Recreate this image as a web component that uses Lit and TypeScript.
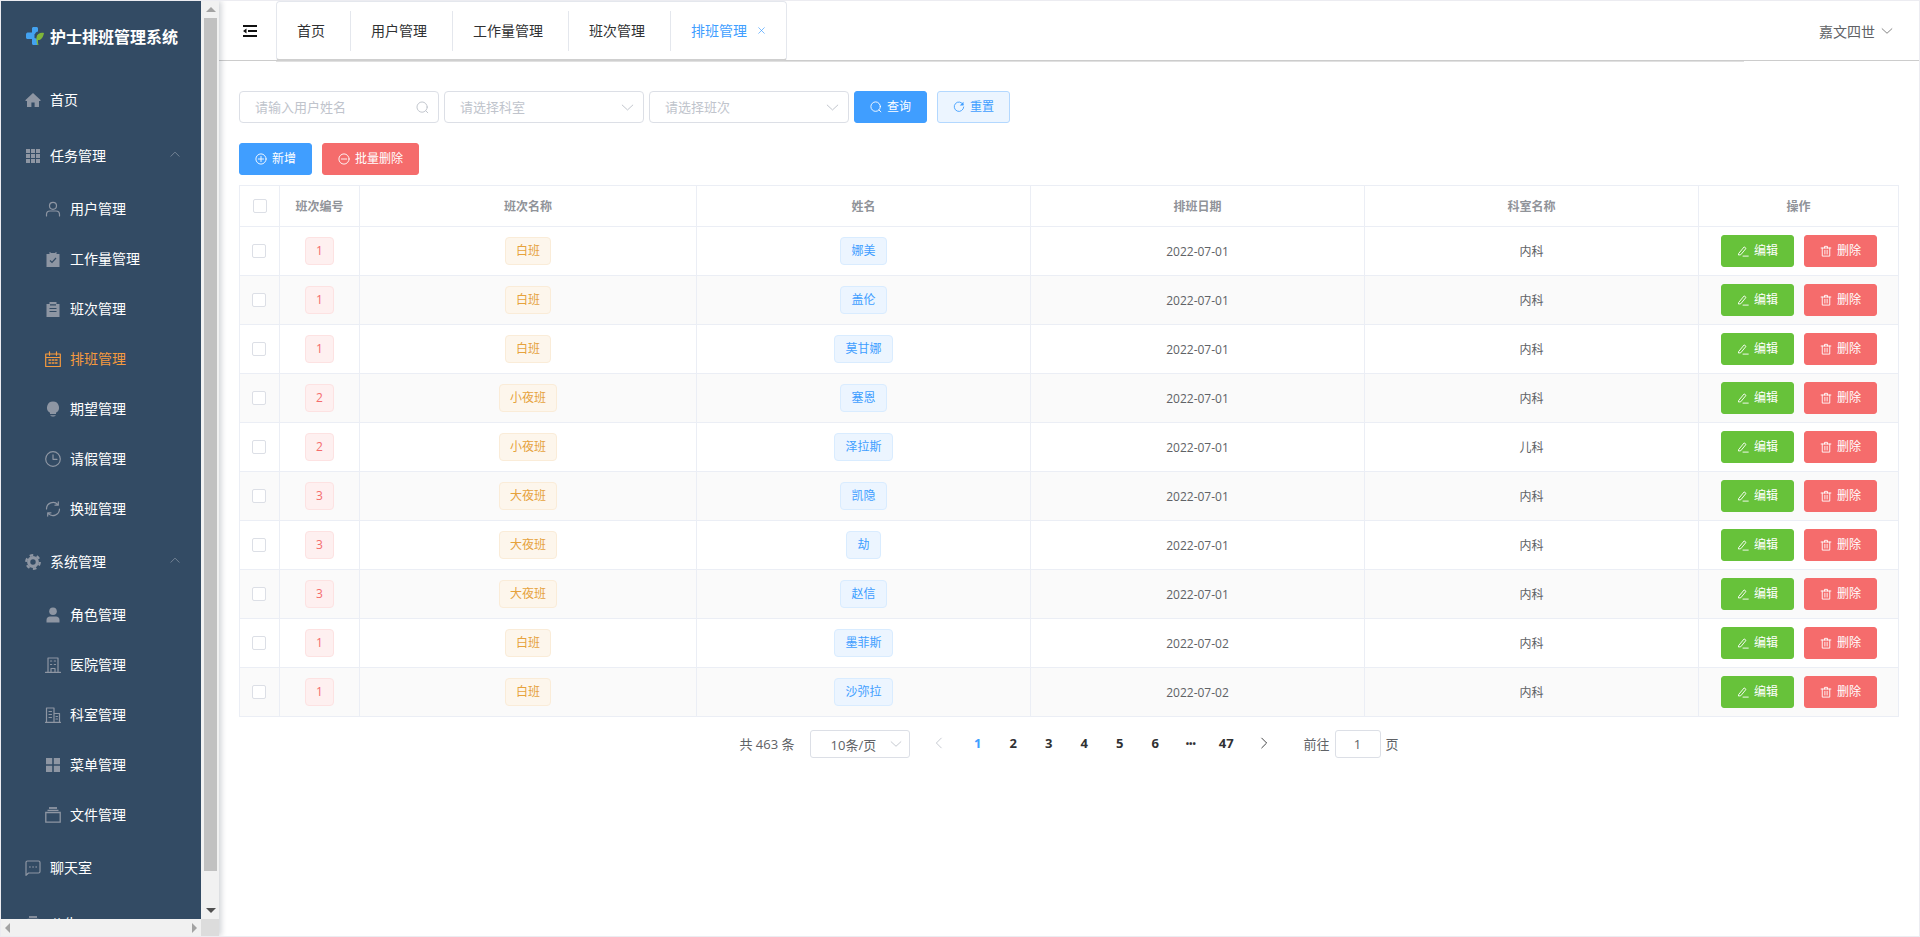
import { LitElement, html, svg, css, SVGTemplateResult, TemplateResult } from "lit";
import { customElement } from "lit/decorators.js";

const sk = (inner: SVGTemplateResult, cls = "") =>
  html`<svg class="ic ${cls}" viewBox="0 0 16 16" fill="none" stroke="currentColor" stroke-width="1.2" stroke-linecap="round" stroke-linejoin="round">${inner}</svg>`;
const fl = (inner: SVGTemplateResult, cls = "") =>
  html`<svg class="ic ${cls}" viewBox="0 0 16 16" fill="currentColor" stroke="none">${inner}</svg>`;

const icons: Record<string, () => TemplateResult> = {
  home: () => fl(svg`<path d="M8 1 .5 8v1H2v6h4.400v-4.500h3.200V15H14V9h1.500V8z"/>`),
  grid: () => fl(svg`<path d="M1 1h4v4H1zM6 1h4v4H6zM11 1h4v4h-4zM1 6h4v4H1zM6 6h4v4H6zM11 6h4v4h-4zM1 11h4v4H1zM6 11h4v4H6zM11 11h4v4h-4z"/>`),
  user: () => sk(svg`<circle cx="8" cy="4.800" r="3.500"/><path d="M1.500 15v-1.500c0-2 1.500-3.500 3.500-3.500h6c2 0 3.500 1.500 3.500 3.500V15"/>`),
  claim: () => html`<svg class="ic" viewBox="0 0 16 16"><path fill="currentColor" d="M1.500 3h3V1h1v1h5V1h1v2h3v13h-13z"/><path fill="none" stroke="#334b64" stroke-width="1.200" d="M5 9.500l2 2 4-4.500"/></svg>`,
  order: () => html`<svg class="ic" viewBox="0 0 16 16"><path fill="currentColor" d="M1.500 3h3V1h7v2h3v13h-13z"/><path fill="none" stroke="#334b64" stroke-width="1.200" d="M4.500 7.500h7M4.500 10.500h7M5 3.800h6"/></svg>`,
  date: () => sk(svg`<path d="M.7 3h14.600v12.500H.7zM.7 6.500h14.600M4.500 .8v3.500M11.500 .8v3.500"/><path stroke-width="1.500" d="M4 9h1.500M7.300 9h1.500M10.500 9h1.500M4 12h1.500M7.300 12h1.500M10.500 12h1.500"/>`),
  bulb: () => fl(svg`<path d="M8 .5a6 6 0 0 0-3 11.200V13h6v-1.300A6 6 0 0 0 8 .5zM5.500 14h5v.8h-5zM6.500 15.200h3v.6h-3z"/>`),
  time: () => sk(svg`<circle cx="8" cy="8" r="7.300"/><path d="M8 3.800v4.500h4"/>`),
  refresh: () => sk(svg`<path d="M1.500 8A6.500 6.500 0 0 1 12.800 3.600M14.500 8A6.500 6.500 0 0 1 3.200 12.400M13.300 .9v3.300H10M2.700 15.100v-3.300H6"/>`),
  gear: () => html`<svg class="ic gear" viewBox="0 0 16 16" fill="none" stroke="currentColor"><circle cx="8" cy="8" r="4.300" stroke-width="3.200"/><circle cx="8" cy="8" r="6.800" stroke-width="2.200" stroke-dasharray="3.600 3.520"/></svg>`,
  custom: () => fl(svg`<circle cx="8" cy="4.300" r="3.800"/><path d="M1.500 15.500V13c0-2 1.500-3.500 3.500-3.500h6c2 0 3.500 1.500 3.500 3.500v2.500z"/>`),
  office: () => sk(svg`<path d="M3 15V1h10v14M.5 15.300h15M6 15v-3.500h4V15"/><path d="M5.500 4h1.200M9.300 4h1.200M5.500 7.500h1.200M9.300 7.500h1.200"/>`),
  dept: () => sk(svg`<path d="M1.500 15V1h7.500v14M9 6.500h5.500V15M.5 15.300h15M4 4.500h2.500M4 7.500h2.500M4 10.500h2.500M11 9.500h1.500M11 12h1.500"/>`),
  menu: () => fl(svg`<path d="M1 1h6.200v6.200H1zM8.800 1H15v6.200H8.800zM1 8.800h6.200V15H1zM8.800 8.800H15V15H8.800z"/>`),
  files: () => html`<svg class="ic" viewBox="0 0 16 16" fill="none" stroke="currentColor" stroke-width="1.300"><path d="M.8 5.500h14.400v9.700H.8zM2.500 3.300h11"/><path stroke-width="1.800" d="M4 1h8"/></svg>`,
  chat: () => sk(svg`<path d="M2.500 1h11c.8 0 1.500.7 1.500 1.500v9c0 .8-.7 1.500-1.500 1.500H3.500L1 15.300V2.500C1 1.700 1.700 1 2.500 1z"/><path stroke-width="1.300" d="M4.800 7h.3M7.900 7h.3M11 7h.3"/>`),
  search: () => sk(svg`<circle cx="7.500" cy="7.500" r="6.300"/><path d="M12 12l2.500 2.500"/>`),
  reset: () => sk(svg`<path d="M13.500 4.500A6.300 6.300 0 1 0 14.300 8"/><path fill="currentColor" stroke="none" d="M14 1v5h-5z"/>`),
  plusc: () => sk(svg`<circle cx="8" cy="8" r="6.800"/><path d="M8 4.500v7M4.500 8h7"/>`),
  minusc: () => sk(svg`<circle cx="8" cy="8" r="6.800"/><path d="M4.500 8h7"/>`),
  edit: () => sk(svg`<path d="M2.500 11 9.500 2.500l2.500 2-7 8.500-2.500.3zM8 14.800h7"/>`),
  trash: () => sk(svg`<path d="M1.500 4h13M6 4V1.800h4V4M3 4v10.800h10V4M6.500 7v5M9.500 7v5"/>`),
  down: () => sk(svg`<path d="M1.500 5 8 11l6.500-6"/>`),
  left: () => sk(svg`<path d="M11 1.500 4.500 8l6.500 6.500"/>`),
  right: () => sk(svg`<path d="M5 1.500 11.500 8 5 14.500"/>`),
  close: () => sk(svg`<path d="M3 3l10 10M13 3 3 13"/>`),
};

interface MenuEntry { t: string; i: string; open?: boolean; sub?: { t: string; i: string; active?: boolean }[] }
const MENU: MenuEntry[] = [
  { t: "首页", i: "home" },
  { t: "任务管理", i: "grid", open: true, sub: [
    { t: "用户管理", i: "user" }, { t: "工作量管理", i: "claim" }, { t: "班次管理", i: "order" },
    { t: "排班管理", i: "date", active: true }, { t: "期望管理", i: "bulb" }, { t: "请假管理", i: "time" }, { t: "换班管理", i: "refresh" },
  ] },
  { t: "系统管理", i: "gear", open: true, sub: [
    { t: "角色管理", i: "custom" }, { t: "医院管理", i: "office" }, { t: "科室管理", i: "dept" },
    { t: "菜单管理", i: "menu" }, { t: "文件管理", i: "files" },
  ] },
  { t: "聊天室", i: "chat" },
  { t: "公告", i: "files" },
];

const TABS = ["首页", "用户管理", "工作量管理", "班次管理"];
const ROWS = [
  ["1", "白班", "娜美", "2022-07-01", "内科"],
  ["1", "白班", "盖伦", "2022-07-01", "内科"],
  ["1", "白班", "莫甘娜", "2022-07-01", "内科"],
  ["2", "小夜班", "塞恩", "2022-07-01", "内科"],
  ["2", "小夜班", "泽拉斯", "2022-07-01", "儿科"],
  ["3", "大夜班", "凯隐", "2022-07-01", "内科"],
  ["3", "大夜班", "劫", "2022-07-01", "内科"],
  ["3", "大夜班", "赵信", "2022-07-01", "内科"],
  ["1", "白班", "墨菲斯", "2022-07-02", "内科"],
  ["1", "白班", "沙弥拉", "2022-07-02", "内科"],
];
const HEAD = ["班次编号", "班次名称", "姓名", "排班日期", "科室名称", "操作"];

@customElement("app-root")
export class AppRoot extends LitElement {
  static styles = css`
    :host {
      display: flex;
      box-sizing: border-box;
      height: 937px;
      border: 1px solid #ececf1;
      background: #fff;
      font-family: "Open Sans", "Noto Sans CJK SC", sans-serif;
      font-size: 14px;
      color: #606266;
      overflow: hidden;
    }
    * { box-sizing: border-box; }
    .ic { width: 14px; height: 14px; flex: none; display: block; }

    .side {
      width: 218px;
      flex: none;
      display: grid;
      grid-template-columns: 200px 18px;
      grid-template-rows: 918px 17px;
      box-shadow: 2px 0 6px rgba(0, 21, 41, 0.2);
      position: relative;
      z-index: 2;
    }
    .nav { background: #334b64; overflow: hidden; color: #fff; }
    .logo { height: 71px; display: flex; align-items: center; padding: 0 0 2px 25px; gap: 6px; font-size: 16px; font-weight: 700; }
    .logo svg { width: 18px; height: 18px; flex: none; }
    .item { height: 56px; display: flex; align-items: center; padding-left: 24px; gap: 9px; color: #fff; line-height: 20px; }
    .item .ic { color: #8e96a3; width: 16px; height: 16px; }
    .item .chev { width: 10px; height: 10px; margin-left: auto; margin-right: 21px; margin-top: -4px; color: #7d8c9c; }
    .sub { height: 50px; padding-left: 44px; }
    .sub.active { color: #f59a3e; }
    .sub.active .ic { color: #f59a3e; }

    .vbar { background: #f1f1f1; display: flex; flex-direction: column; align-items: flex-end; padding-right: 2px; }
    .arrow { height: 17px; width: 13px; display: flex; align-items: center; justify-content: center; flex: none; }
    .tri { width: 0; height: 0; border-style: solid; border-color: transparent; }
    .tri.u { border-width: 0 5px 5px; border-bottom-color: #a3a3a3; }
    .tri.d { border-width: 5px 5px 0; border-top-color: #505050; }
    .tri.l { border-width: 5px 5px 5px 0; border-right-color: #a3a3a3; }
    .tri.r { border-width: 5px 0 5px 5px; border-left-color: #a3a3a3; }
    .thumb { width: 13px; height: 853px; background: #c1c1c1; flex: none; }
    .spacer { flex: 1; }
    .hbar { background: #f1f1f1; display: flex; align-items: center; justify-content: space-between; padding: 0 4px; }
    .corner { background: #dcdcdc; }

    .main { flex: 1; min-width: 0; display: flex; flex-direction: column; }
    .top { height: 60px; flex: none; display: flex; border-bottom: 1px solid #ccc; background: #fff; }
    .burger { width: 57px; flex: none; display: flex; align-items: center; justify-content: center; padding-top: 1px; padding-left: 4px; color: #111; }
    .burger svg { width: 14px; height: 12px; display: block; }
    .tabwrap { flex: 1; height: 61px; border-bottom: 1px solid #e0e0e0; }
    .tabs {
      display: inline-flex;
      height: 60px;
      border: 1px solid #e4e7ed;
      border-bottom: 2px solid #cfcfcf;
      border-radius: 4px;
      background: #fff;
      align-items: center;
    }
    .tab { height: 40px; padding: 0 25px 0 20px; display: flex; align-items: center; color: #303133; border-right: 1px solid #e4e7ed; line-height: 20px; }
    .tab:last-child { border-right: 0; padding-right: 20px; color: #409eff; gap: 10px; }
    .tab .ic { width: 9px; height: 9px; }
    .userbox { width: 175px; flex: none; display: flex; align-items: center; justify-content: flex-end; padding-right: 26px; gap: 6px; color: #606266; }
    .userbox .ic { width: 12px; height: 12px; color: #777; }

    .content { padding: 30px 20px 0 20px; }
    .filters { display: flex; align-items: center; height: 32px; }
    .field {
      width: 200px; height: 32px; margin-right: 5px; border: 1px solid #dcdfe6; border-radius: 4px;
      display: flex; align-items: center; padding: 0 9px 0 15px; color: #c0c4cc; font-size: 13px; justify-content: space-between;
    }
    .field span { margin-top: -2px; }
    .field .ic { width: 13px; height: 13px; color: #c0c4cc; }
    .btn {
      display: inline-flex; align-items: center; justify-content: center; gap: 5px; height: 32px; padding: 0 15px;
      border-radius: 3px; border: 1px solid transparent; font-size: 12px; color: #fff; line-height: 14px; flex: none;
    }
    .btn .ic { width: 12px; height: 12px; }
    .primary { background: #409eff; border-color: #409eff; }
    .danger { background: #f56c6c; border-color: #f56c6c; }
    .success { background: #67c23a; border-color: #67c23a; }
    .plain { background: #ecf5ff; border-color: #b3d8ff; color: #409eff; margin-left: 10px; }
    .actions { display: flex; gap: 10px; margin-top: 20px; }

    table { margin-top: 10px; border-collapse: separate; border-spacing: 0; table-layout: fixed; width: 1660px; font-size: 12px; }
    th, td { border-left: 1px solid #ebeef5; border-bottom: 1px solid #ebeef5; text-align: center; padding: 0; }
    th { height: 42px; border-top: 1px solid #ebeef5; color: #909399; font-weight: 700; }
    td { height: 49px; }
    th:last-child, td:last-child { border-right: 1px solid #ebeef5; }
    tbody tr:nth-child(even) td { background: #fafafa; }
    .c1 { width: 40px; } .c2 { width: 80px; } .c3 { width: 337px; } .c4 { width: 334px; } .c7 { width: 201px; }
    .check { width: 14px; height: 14px; border: 1px solid #dcdfe6; border-radius: 2px; background: #fff; margin: 0 auto; }
    td .check { margin-left: 12px; }
    .tag { display: inline-block; height: 28px; line-height: 26px; padding: 0 10px; border: 1px solid; border-radius: 4px; vertical-align: middle; }
    .red { color: #f56c6c; background: #fef0f0; border-color: #fde2e2; }
    .orange { color: #e6a23c; background: #fdf6ec; border-color: #faecd8; }
    .blue { color: #409eff; background: #ecf5ff; border-color: #d9ecff; }
    .ops { display: flex; justify-content: flex-start; gap: 10px; padding-left: 22px; }

    .pager { margin-top: 13px; height: 28px; display: flex; align-items: center; justify-content: center; font-size: 13px; color: #606266; }
    .pager > span, .jump span { margin-top: -2px; }
    .total { margin-right: 15px; }
    .size {
      width: 100px; height: 28px; border: 1px solid #dcdfe6; border-radius: 3px; display: flex; align-items: center;
      justify-content: space-between; padding: 0 7px 0 20px; margin-right: 15px; color: #606266;
    }
    .size .ic { width: 12px; height: 12px; color: #c0c4cc; }
    .nb { width: 35.5px; height: 28px; display: flex; align-items: center; justify-content: center; font-weight: 700; color: #303133; flex: none; padding-bottom: 2px; }
    .nb.on { color: #409eff; }
    .nb.more { font-size: 9px; }
    .nb .ic { width: 12px; height: 12px; }
    .nb.prev { color: #c0c4cc; padding-right: 6px; }
    .nb.next { padding-left: 4px; color: #303133; }
    .jump { margin-left: 24px; display: flex; align-items: center; gap: 5px; }
    .jump div { width: 46px; height: 28px; border: 1px solid #dcdfe6; border-radius: 3px; display: flex; align-items: center; justify-content: center; }
  `;

  renderNav() {
    return html`
      <div class="nav">
        <div class="logo">
          <svg viewBox="0 0 18 18">
            <path fill="#43a2f0" d="M6 1.500C6 .7 6.700 0 7.500 0h3c.8 0 1.500.7 1.500 1.500V4.500c-1.300.2-2.500 1-3 2.500h-.5V11L12 12v4.500c0 .8-.7 1.500-1.500 1.500h-3C6.700 18 6 17.300 6 16.500V12H1.500C.7 12 0 11.300 0 10.500v-3C0 6.700.7 5.500 1.500 5.500H6z"/>
            <path fill="#7fb539" d="M18 6c-3.500-.8-7 .5-7.500 4.500-.2 2.500 0 5 .8 7.500h1.200c-.5-2-.7-3.500-.5-5 3.200.4 5.200-2.700 6-7z"/>
          </svg>
          <span>护士排班管理系统</span>
        </div>
        ${MENU.map(
          (m) => html`
            <div class="item">
              ${icons[m.i]()}<span>${m.t}</span>
              ${m.open ? html`<svg class="ic chev" viewBox="0 0 16 16" fill="none" stroke="currentColor" stroke-width="1.400"><path d="M1 12 8 5l7 7"/></svg>` : ""}
            </div>
            ${(m.sub || []).map(
              (s) => html`<div class="item sub ${s.active ? "active" : ""}">${icons[s.i]()}<span>${s.t}</span></div>`
            )}
          `
        )}
      </div>
    `;
  }

  render() {
    return html`
      <aside class="side">
        ${this.renderNav()}
        <div class="vbar">
          <div class="arrow"><div class="tri u"></div></div>
          <div class="thumb"></div>
          <div class="spacer"></div>
          <div class="arrow"><div class="tri d"></div></div>
        </div>
        <div class="hbar"><div class="tri l"></div><div class="tri r"></div></div>
        <div class="corner"></div>
      </aside>
      <div class="main">
        <header class="top">
          <div class="burger">
            <svg viewBox="0 0 14 12" fill="currentColor"><path d="M0 0h14v2H0zM5 5h9v2H5zM0 10h14v2H0zM0 6l3.500-2.500v5z"/></svg>
          </div>
          <div class="tabwrap">
            <div class="tabs">
              ${TABS.map((t) => html`<div class="tab">${t}</div>`)}
              <div class="tab">排班管理${icons.close()}</div>
            </div>
          </div>
          <div class="userbox"><span>嘉文四世</span>${icons.down()}</div>
        </header>
        <div class="content">
          <div class="filters">
            <div class="field"><span>请输入用户姓名</span>${icons.search()}</div>
            <div class="field"><span>请选择科室</span>${icons.down()}</div>
            <div class="field"><span>请选择班次</span>${icons.down()}</div>
            <div class="btn primary">${icons.search()}<span>查询</span></div>
            <div class="btn plain">${icons.reset()}<span>重置</span></div>
          </div>
          <div class="actions">
            <div class="btn primary">${icons.plusc()}<span>新增</span></div>
            <div class="btn danger">${icons.minusc()}<span>批量删除</span></div>
          </div>
          <table>
            <thead>
              <tr>
                <th class="c1"><div class="check"></div></th>
                <th class="c2">${HEAD[0]}</th>
                <th class="c3">${HEAD[1]}</th>
                <th class="c4">${HEAD[2]}</th>
                <th class="c4">${HEAD[3]}</th>
                <th class="c4">${HEAD[4]}</th>
                <th class="c7">${HEAD[5]}</th>
              </tr>
            </thead>
            <tbody>
              ${ROWS.map(
                (r) => html`
                  <tr>
                    <td><div class="check"></div></td>
                    <td><span class="tag red">${r[0]}</span></td>
                    <td><span class="tag orange">${r[1]}</span></td>
                    <td><span class="tag blue">${r[2]}</span></td>
                    <td>${r[3]}</td>
                    <td>${r[4]}</td>
                    <td>
                      <div class="ops">
                        <div class="btn success">${icons.edit()}<span>编辑</span></div>
                        <div class="btn danger">${icons.trash()}<span>删除</span></div>
                      </div>
                    </td>
                  </tr>
                `
              )}
            </tbody>
          </table>
          <div class="pager">
            <span class="total">共 463 条</span>
            <div class="size"><span>10条/页</span>${icons.down()}</div>
            <div class="nb prev">${icons.left()}</div>
            ${["1", "2", "3", "4", "5", "6", "•••", "47"].map(
              (n, i) => html`<div class="nb ${i === 0 ? "on" : ""} ${i === 6 ? "more" : ""}">${n}</div>`
            )}
            <div class="nb next">${icons.right()}</div>
            <div class="jump"><span>前往</span><div>1</div><span>页</span></div>
          </div>
        </div>
      </div>
    `;
  }
}
